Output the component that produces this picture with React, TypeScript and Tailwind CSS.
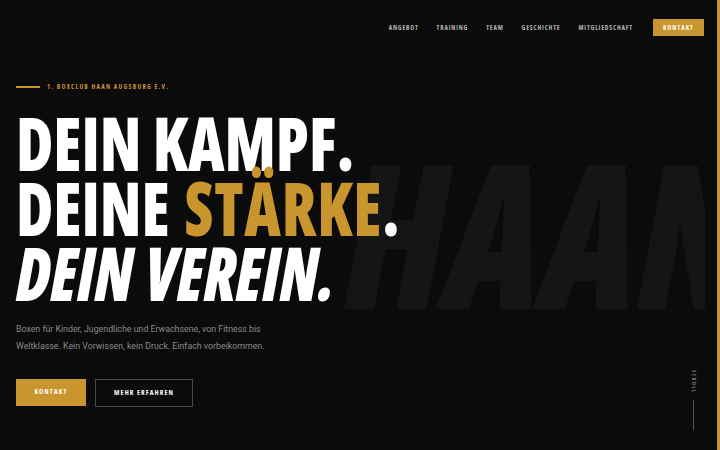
import React from 'react';

const NAV = ['ANGEBOT', 'TRAINING', 'TEAM', 'GESCHICHTE', 'MITGLIEDSCHAFT'];

// Open Sans in its narrowest width, heavy – closest thing to the condensed display face
const display = { fontFamily: '"Open Sans", sans-serif', fontStretch: '75%' };
const body = { fontFamily: 'Roboto, "Liberation Sans", sans-serif' };

export default function App() {
  return (
    <div className="relative w-[720px] h-[450px] overflow-hidden bg-[#0b0b0b] border-r-[3px] border-[#c9952f]">
      {/* watermark */}
      <div className="absolute left-0 top-0 w-[705px] h-[450px] overflow-hidden pointer-events-none">
        <div
          className="absolute left-[345px] top-[132px] origin-left scale-x-[0.9] text-[200px] leading-none font-extrabold italic text-[#151515] whitespace-nowrap select-none"
          style={display}
        >
          HAAN
        </div>
      </div>

      <header className="relative flex justify-end items-center pt-[19px] pr-[13px]" style={display}>
        <nav className="flex items-center gap-[18px] mr-[20px]">
          {NAV.map((n) => (
            <a key={n} className="text-[6.5px] font-bold tracking-[0.13em] text-[#b5b5b5]">
              {n}
            </a>
          ))}
        </nav>
        <a className="h-[17px] w-[51px] flex items-center justify-center bg-[#c9952f] text-[6.5px] font-bold tracking-[0.16em] text-white">
          KONTAKT
        </a>
      </header>

      <main className="relative pl-[16px] mt-[46px]">
        <div className="flex items-center gap-[7px]" style={display}>
          <span className="block w-[24px] h-[2px] bg-[#c9952f]" />
          <span className="text-[6.5px] font-bold tracking-[0.2em] text-[#c9952f]">1. BOXCLUB HAAN AUGSBURG E.V.</span>
        </div>

        <h1
          className="mt-[18px] origin-left scale-x-[0.86] text-[74px] leading-[65px] font-extrabold text-white whitespace-nowrap"
          style={display}
        >
          <div>DEIN KAMPF.</div>
          <div className="[word-spacing:4px]">
            DEINE <span className="text-[#c9952f] tracking-[1px]">STÄRKE</span>.
          </div>
          <div className="italic">DEIN VEREIN.</div>
        </h1>

        <p className="mt-[16px] text-[8.8px] leading-[17px] text-[#8a8a8a] whitespace-nowrap" style={body}>
          Boxen für Kinder, Jugendliche und Erwachsene, von Fitness bis
          <br />
          Weltklasse. Kein Vorwissen, kein Druck. Einfach vorbeikommen.
        </p>

        <div className="mt-[24px] flex gap-[9px]" style={display}>
          <a className="w-[70px] h-[27px] flex items-center justify-center bg-[#c9952f] text-white text-[7px] font-bold tracking-[0.16em]">
            KONTAKT
          </a>
          <a className="w-[98px] h-[28px] flex items-center justify-center border border-[#4a4a4a] text-white text-[7px] font-bold tracking-[0.16em]">
            MEHR ERFAHREN
          </a>
        </div>
      </main>

      <div className="absolute right-[19px] top-[370px] flex flex-col items-center gap-[6px]" style={display}>
        <span className="[writing-mode:vertical-rl] text-[5.5px] font-bold tracking-[0.24em] text-[#777]">SCROLL</span>
        <span className="block w-px h-[30px] bg-[#555]" />
      </div>
    </div>
  );
}
